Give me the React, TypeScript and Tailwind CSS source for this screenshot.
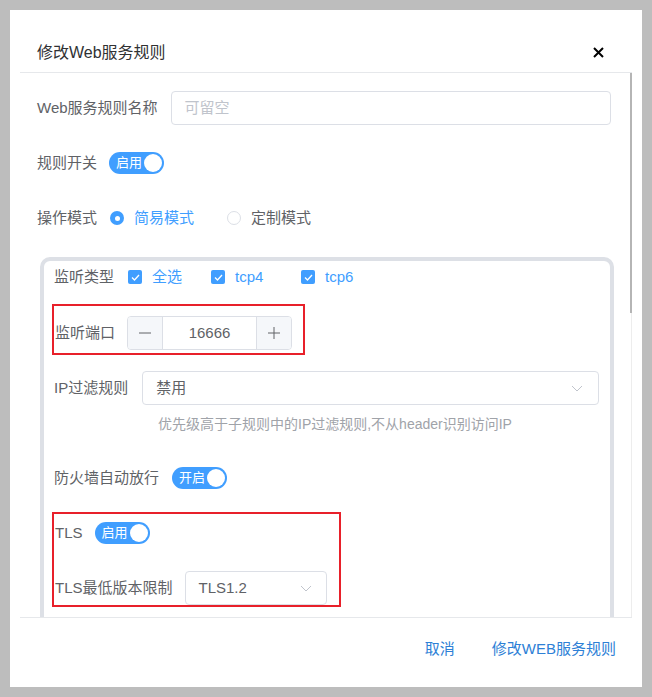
import React from "react";

const font = "font-['Liberation_Sans','Noto_Sans_CJK_SC',sans-serif]";

function Switch({ text }: { text: string }) {
  return (
    <div className="relative flex items-center w-[55px] h-[22px] rounded-full bg-[#409eff] shrink-0">
      <span className="pl-[7px] text-[13px] leading-[22px] text-white">{text}</span>
      <span className="absolute right-[2px] top-[2px] w-[18px] h-[18px] rounded-full bg-white" />
    </div>
  );
}

function Chevron() {
  return (
    <svg width="12" height="7" viewBox="0 0 12 7" fill="none">
      <path d="M1 1L6 6L11 1" stroke="#c0c4cc" strokeWidth="1" />
    </svg>
  );
}

function Checkbox() {
  return (
    <span className="flex items-center justify-center w-[14px] h-[14px] rounded-[2px] bg-[#409eff] shrink-0">
      <svg width="9" height="7" viewBox="0 0 9 7" fill="none">
        <path d="M1 3.5L3.5 6L8 1" stroke="white" strokeWidth="1.3" />
      </svg>
    </span>
  );
}

export default function App() {
  return (
    <div className={`w-[652px] h-[697px] bg-[#bdbdbd] pt-[10px] pl-[10px] ${font}`}>
      <div className="w-[632px] h-[677px] bg-white px-[10px] flex flex-col">
        {/* header */}
        <div className="h-[63px] border-b border-[#e6e8eb] flex items-end justify-between pl-[17px] pr-[28px] pb-[7px]">
          <span className="text-[16px] leading-[24px] text-[#303133]">修改Web服务规则</span>
          <svg width="11" height="11" viewBox="0 0 11 11" className="mb-[7px]">
            <path d="M1 1L10 10M10 1L1 10" stroke="#000" strokeWidth="2" />
          </svg>
        </div>
        {/* scroll area */}
        <div className="h-[545px] border-b border-[#e6e8eb] flex overflow-hidden">
          <div className="flex-1 overflow-hidden pl-[17px] pr-[18px] pt-[18px] text-[15px] text-[#606266]">
            <div className="flex items-center h-[34px]">
              <span className="mr-[13px] whitespace-nowrap">Web服务规则名称</span>
              <div className="flex-1 h-[34px] border border-[#dcdfe6] rounded-[4px] pl-[13px] flex items-center text-[#c0c4cc]">
                可留空
              </div>
            </div>
            <div className="flex items-center h-[34px] mt-[21px]">
              <span className="mr-[12px]">规则开关</span>
              <Switch text="启用" />
            </div>
            <div className="flex items-center h-[34px] mt-[21px]">
              <span className="mr-[13px]">操作模式</span>
              <div className="flex items-center w-[117px]">
                <span className="w-[14px] h-[14px] rounded-full bg-[#409eff] flex items-center justify-center mr-[10px]">
                  <span className="w-[5px] h-[5px] rounded-full bg-white" />
                </span>
                <span className="text-[#409eff]">简易模式</span>
              </div>
              <div className="flex items-center">
                <span className="w-[14px] h-[14px] rounded-full border border-[#dcdfe6] bg-white mr-[10px]" />
                <span>定制模式</span>
              </div>
            </div>
            {/* card */}
            <div className="mt-[22px] ml-[3px] -mr-[3px] border-[4px] border-[#dde0e6] rounded-[10px] px-[7px] pb-[60px]">
              <div className="flex items-center h-[32px] pl-[3px]">
                <span className="mr-[14px]">监听类型</span>
                <div className="flex items-center w-[83px]">
                  <Checkbox />
                  <span className="ml-[10px] text-[#409eff]">全选</span>
                </div>
                <div className="flex items-center w-[90px]">
                  <Checkbox />
                  <span className="ml-[10px] text-[#409eff]">tcp4</span>
                </div>
                <div className="flex items-center">
                  <Checkbox />
                  <span className="ml-[10px] text-[#409eff]">tcp6</span>
                </div>
              </div>
              {/* red box 1 */}
              <div className="mt-[11px] ml-[1px] w-fit border-2 border-[#e8202a] pt-[10px] pb-[3px] pl-[1px] pr-[11px]">
                <div className="flex items-center h-[34px]">
                  <span className="mr-[12px]">监听端口</span>
                  <div className="flex w-[165px] h-[34px] border border-[#dcdfe6] rounded-[4px] overflow-hidden">
                    <div className="w-[35px] bg-[#f5f7fa] border-r border-[#dcdfe6] flex items-center justify-center">
                      <svg width="12" height="2" viewBox="0 0 12 2"><path d="M0 1H12" stroke="#606266" strokeWidth="1" /></svg>
                    </div>
                    <div className="flex-1 flex items-center justify-center text-[#606266]">16666</div>
                    <div className="w-[35px] bg-[#f5f7fa] border-l border-[#dcdfe6] flex items-center justify-center">
                      <svg width="12" height="12" viewBox="0 0 12 12"><path d="M0 6H12M6 0V12" stroke="#606266" strokeWidth="1" /></svg>
                    </div>
                  </div>
                </div>
              </div>
              <div className="flex items-center h-[34px] mt-[16px] pl-[3px] pr-[4px]">
                <span className="mr-[14px] whitespace-nowrap">IP过滤规则</span>
                <div className="flex-1 h-[34px] border border-[#dcdfe6] rounded-[4px] pl-[13px] pr-[15px] flex items-center justify-between">
                  <span>禁用</span>
                  <Chevron />
                </div>
              </div>
              <div className="pl-[107px] mt-[9px] text-[14px] leading-[20px] text-[#a0a3a9] whitespace-nowrap">
                优先级高于子规则中的IP过滤规则,不从header识别访问IP
              </div>
              <div className="flex items-center h-[34px] mt-[27px] pl-[3px]">
                <span className="mr-[13px]">防火墙自动放行</span>
                <Switch text="开启" />
              </div>
              {/* red box 2 */}
              <div className="mt-[17px] ml-[1px] w-fit border-2 border-[#e8202a] pt-[2px] pl-[1px] pr-[12px]">
                <div className="flex items-center h-[34px]">
                  <span className="mr-[12px]">TLS</span>
                  <Switch text="启用" />
                </div>
                <div className="flex items-center h-[34px] mt-[21px]">
                  <span className="mr-[12px] whitespace-nowrap">TLS最低版本限制</span>
                  <div className="w-[142px] h-[34px] border border-[#dcdfe6] rounded-[4px] pl-[13px] pr-[14px] flex items-center justify-between">
                    <span>TLS1.2</span>
                    <Chevron />
                  </div>
                </div>
              </div>
            </div>
          </div>
          {/* scrollbar */}
          <div className="w-[3px] flex flex-col">
            <div className="h-[240px] w-[2px] ml-[1px] bg-[#b5b5b5]" />
            <div className="flex-1 w-[1px] ml-[2px] bg-[#ededed]" />
          </div>
        </div>
        {/* footer */}
        <div className="flex justify-end items-start pt-[21px] pr-[16px] gap-[37px] text-[15px] leading-[20px] text-[#2d80d6]">
          <span>取消</span>
          <span>修改WEB服务规则</span>
        </div>
      </div>
    </div>
  );
}
